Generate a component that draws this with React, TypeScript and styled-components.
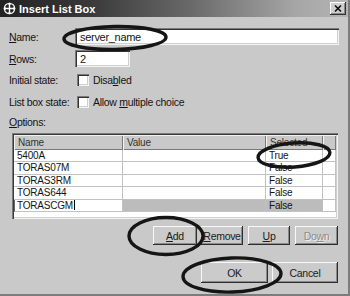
import React from "react";
import styled, { createGlobalStyle, css } from "styled-components";

const Global = createGlobalStyle`
  html, body { margin: 0; padding: 0; background: #c8c8c8; }
  #root { width: 350px; height: 296px; }
`;

const FONT = `"Liberation Sans", Arial, sans-serif`;

const Window = styled.div`
  position: relative;
  width: 350px;
  height: 296px;
  box-sizing: border-box;
  background: #c9c9c9;
  border-right: 2px solid #7c7c7c;
  border-bottom: 2px solid #7c7c7c;
  display: flex;
  flex-direction: column;
  font-family: ${FONT};
  font-size: 10.5px;
  letter-spacing: -0.3px;
  color: #141414;
  overflow: hidden;
`;

const TitleBar = styled.div`
  height: 17px;
  flex: none;
  display: flex;
  align-items: center;
  gap: 3px;
  padding: 0 2px 0 3px;
  background: linear-gradient(to right, #222 0%, #383838 25%, #6a6a6a 55%, #a6a6a6 85%, #b4b4b4 100%);
`;

const TitleText = styled.span`
  flex: 1;
  color: #fff;
  font-weight: bold;
  font-size: 11px;
  letter-spacing: 0;
`;

const CloseBox = styled.div`
  width: 16px;
  height: 13px;
  box-sizing: border-box;
  background: #cfcfcf;
  box-shadow: inset -1px -1px #333, inset 1px 1px #fff, inset -2px -2px #888;
  display: flex;
  align-items: center;
  justify-content: center;
`;

const Body = styled.div`
  flex: 1;
  display: flex;
  flex-direction: column;
  padding: 11px 9px 0 9px;
`;

const FieldRow = styled.div<{ $h: number; $mb: number }>`
  display: flex;
  align-items: center;
  height: ${(p) => p.$h}px;
  margin-bottom: ${(p) => p.$mb}px;
`;

const Label = styled.div`
  width: 66px;
  flex: none;
  white-space: nowrap;
`;

const sunken = css`
  box-sizing: border-box;
  background: #fff;
  box-shadow: inset 1px 1px #7a7a7a, inset 2px 2px #333, inset -1px -1px #f4f4f4, inset -2px -2px #cfcfcf;
`;

const TextBox = styled.div<{ $w?: number }>`
  ${sunken};
  height: 17px;
  ${(p) => (p.$w ? `width: ${p.$w}px;` : "flex: 1;")}
  padding: 2px 5px 0;
  line-height: 14px;
  font-size: 11px;
`;

const Check = styled.div`
  ${sunken};
  width: 12px;
  height: 12px;
  margin-left: 2px;
  margin-right: 4px;
`;

const U = styled.span`
  text-decoration: underline;
`;

const OptionsLabel = styled.div`
  height: 12px;
  line-height: 12px;
  margin-bottom: 5px;
`;

const Table = styled.div`
  height: 86px;
  margin-left: 3px;
  margin-right: 1px;
  box-sizing: border-box;
  background: #fff;
  box-shadow: inset 1px 1px #7a7a7a, inset 2px 2px #3a3a3a, inset -1px -1px #f4f4f4, inset -2px -2px #cfcfcf;
  padding: 2px;
  display: flex;
  flex-direction: column;
  margin-bottom: 7px;
  font-size: 10px;
  letter-spacing: -0.2px;
`;

const Grid = styled.div`
  display: grid;
  grid-template-columns: 109px 143px 57px 1fr;
`;

const HeadCell = styled.div`
  height: 15px;
  box-sizing: border-box;
  background: #c9c9c9;
  box-shadow: inset 1px 1px #f2f2f2, inset -1px -1px #7a7a7a;
  padding-left: 4px;
  line-height: 15px;
  color: #333;
  white-space: nowrap;
  overflow: hidden;
`;

const Cell = styled.div<{ $shade?: boolean; $edit?: boolean }>`
  height: 12.4px;
  box-sizing: border-box;
  border-right: 1px solid #c2c2c2;
  border-bottom: 1px solid #c2c2c2;
  padding-left: 3px;
  line-height: 12px;
  white-space: nowrap;
  overflow: hidden;
  background: ${(p) => (p.$shade ? "#bcbcbc" : "#fff")};
  ${(p) =>
    p.$edit &&
    css`
      border-left: 1px solid #666;
      border-right: 1px solid #c2c2c2;
      padding-left: 2px;
    `}
`;

const Caret = styled.span`
  display: inline-block;
  width: 1px;
  height: 10px;
  margin-left: 1px;
  background: #000;
  vertical-align: -1px;
`;

const ButtonRow = styled.div<{ $h: number; $mb: number }>`
  display: flex;
  justify-content: flex-end;
  gap: 4px;
  height: ${(p) => p.$h}px;
  margin-bottom: ${(p) => p.$mb}px;
  margin-right: 1px;
`;

const Button = styled.div<{ $w: number; $disabled?: boolean; $ml?: number }>`
  width: ${(p) => p.$w}px;
  margin-left: ${(p) => p.$ml ?? 0}px;
  box-sizing: border-box;
  background: #cbcbcb;
  box-shadow: inset -1px -1px #2e2e2e, inset 1px 1px #f8f8f8, inset -2px -2px #8a8a8a;
  display: flex;
  align-items: center;
  justify-content: center;
  color: ${(p) => (p.$disabled ? "#8c8c8c" : "#1a1a1a")};
  text-shadow: ${(p) => (p.$disabled ? "1px 1px #f0f0f0" : "none")};
`;

const Marks = styled.svg`
  position: absolute;
  left: 0;
  top: 0;
  width: 350px;
  height: 296px;
  pointer-events: none;
`;

const rows = [
  ["5400A", "True"],
  ["TORAS07M", "False"],
  ["TORAS3RM", "False"],
  ["TORAS644", "False"],
];

export default function App() {
  return (
    <>
      <Global />
      <Window>
        <TitleBar>
          <svg width="13" height="13" viewBox="0 0 13 13">
            <circle cx="6.5" cy="6.5" r="5.2" fill="none" stroke="#e8e8e8" strokeWidth="1.3" />
            <path d="M6.5 1 V12 M1 6.5 H12" stroke="#fff" strokeWidth="1.4" />
            <path d="M6.5 0.5 L4.8 2.6 H8.2 Z M6.5 12.5 L4.8 10.4 H8.2 Z M0.5 6.5 L2.6 4.8 V8.2 Z M12.5 6.5 L10.4 4.8 V8.2 Z" fill="#fff" />
          </svg>
          <TitleText>Insert List Box</TitleText>
          <CloseBox>
            <svg width="8" height="7" viewBox="0 0 8 7">
              <path d="M1 0.5 L7 6.5 M7 0.5 L1 6.5" stroke="#111" strokeWidth="1.6" />
            </svg>
          </CloseBox>
        </TitleBar>
        <Body>
          <FieldRow $h={17} $mb={5}>
            <Label>
              <U>N</U>ame:
            </Label>
            <TextBox>server_name</TextBox>
          </FieldRow>
          <FieldRow $h={17} $mb={6}>
            <Label>
              <U>R</U>ows:
            </Label>
            <TextBox $w={55}>2</TextBox>
          </FieldRow>
          <FieldRow $h={13} $mb={9}>
            <Label>Initial state:</Label>
            <Check />
            <span>
              Disa<U>b</U>led
            </span>
          </FieldRow>
          <FieldRow $h={13} $mb={8}>
            <Label>List box state:</Label>
            <Check />
            <span>
              Allow <U>m</U>ultiple choice
            </span>
          </FieldRow>
          <OptionsLabel>
            <U>O</U>ptions:
          </OptionsLabel>
          <Table>
            <Grid>
              <HeadCell>Name</HeadCell>
              <HeadCell>Value</HeadCell>
              <HeadCell>Selected</HeadCell>
              <HeadCell />
              {rows.map(([n, s]) => (
                <React.Fragment key={n}>
                  <Cell>{n}</Cell>
                  <Cell />
                  <Cell>{s}</Cell>
                  <Cell />
                </React.Fragment>
              ))}
              <Cell $edit>
                TORASCGM
                <Caret />
              </Cell>
              <Cell $shade />
              <Cell $shade>False</Cell>
              <Cell />
            </Grid>
          </Table>
          <ButtonRow $h={19} $mb={17}>
            <Button $w={44}>
              <U>A</U>dd
            </Button>
            <Button $w={42}>
              <U>R</U>emove
            </Button>
            <Button $w={42} $ml={1}>
              <U>U</U>p
            </Button>
            <Button $w={43} $ml={1} $disabled>
              Do<U>w</U>n
            </Button>
          </ButtonRow>
          <ButtonRow $h={21} $mb={0}>
            <Button $w={67}>OK</Button>
            <Button $w={66}>Cancel</Button>
          </ButtonRow>
        </Body>
        <Marks viewBox="0 0 350 296">
          <g fill="none" stroke="#151515" strokeWidth="3.4">
            <ellipse cx="115" cy="38" rx="51" ry="11.5" transform="rotate(-1 115 38)" />
            <ellipse cx="294" cy="155" rx="36" ry="12" transform="rotate(-4 294 155)" />
            <ellipse cx="166" cy="236" rx="37" ry="18.5" />
            <ellipse cx="232" cy="275" rx="49" ry="17" transform="rotate(-2 232 275)" />
          </g>
        </Marks>
      </Window>
    </>
  );
}
